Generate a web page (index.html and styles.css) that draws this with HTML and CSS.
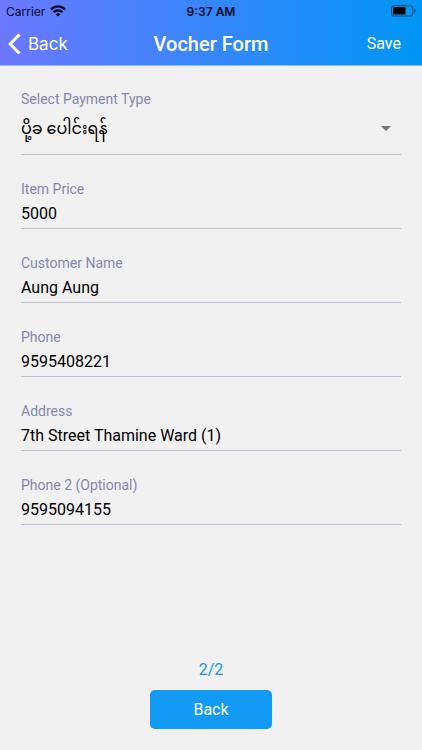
FILE: index.html
```html
<!DOCTYPE html>
<html lang="en">

<head>
  <meta charset="UTF-8">
  <title>Vocher Form</title>
  <meta name="viewport" content="width=device-width, initial-scale=1.0">
  <link rel="stylesheet" href="styles.css">
</head>

<body>

  <header class="header">
    <div class="status-bar">
      <div class="carrier">
        <span>Carrier</span>
        <svg width="16" height="12" viewBox="0 0 16 12" fill="none" stroke="#050a28" stroke-width="2.400">
          <path d="M1 4.400C5 .4 11 .4 15 4.400M3.600 7.200c2.600-2.400 6.200-2.400 8.800 0" />
          <path d="M8 11.600L5.600 9.200c1.400-1.200 3.400-1.200 4.800 0z" fill="#050a28" stroke="none" />
        </svg>
      </div>
      <span class="time">9:37 AM</span>
      <svg class="battery" width="25" height="12" viewBox="0 0 25 12">
        <rect x=".6" y=".6" width="21" height="10.400" rx="2.600" fill="none" stroke="#07518d" stroke-width="1.100" />
        <rect x="2" y="2" width="12.500" height="7.600" rx="1.200" fill="#000" />
        <path d="M23 4v4c1-.3 1.500-1 1.500-2s-.5-1.700-1.500-2z" fill="#07518d" />
      </svg>
    </div>
    <nav class="nav-bar">
      <button type="button" class="nav-back">
        <svg width="13" height="22" viewBox="0 0 13 22" fill="none" stroke="#fff" stroke-width="3">
          <path d="M11.500 1.500L2.200 11l9.300 9.500" />
        </svg>
        Back
      </button>
      <h1 class="nav-title">Vocher Form</h1>
      <button type="submit" form="voucher-form" class="nav-save">Save</button>
    </nav>
  </header>

  <form class="form" id="voucher-form">
    <div class="field">
      <label for="payment-type">Select Payment Type</label>
      <div class="select-wrap">
        <select id="payment-type">
          <option>ပို့ခ ပေါင်းရန်</option>
        </select>
      </div>
    </div>

    <div class="field">
      <label for="price">Item Price</label>
      <input type="text" id="price" value="5000">
    </div>

    <div class="field">
      <label for="name">Customer Name</label>
      <input type="text" id="name" value="Aung Aung">
    </div>

    <div class="field">
      <label for="phone">Phone</label>
      <input type="tel" id="phone" value="9595408221">
    </div>

    <div class="field">
      <label for="address">Address</label>
      <input type="text" id="address" value="7th Street Thamine Ward (1)">
    </div>

    <div class="field">
      <label for="phone2">Phone 2 (Optional)</label>
      <input type="tel" id="phone2" value="9595094155">
    </div>
  </form>

  <footer class="footer">
    <div class="step">2/2</div>
    <button type="button" class="back-btn">Back</button>
  </footer>

</body>

</html>
```
FILE: styles.css
```css
* {
  box-sizing: border-box;
}

body {
  margin: 0;
  min-height: 100vh;
  display: flex;
  flex-direction: column;
  background: #f1f1f1;
  font-family: Roboto, "Noto Sans Myanmar", "Noto Sans", sans-serif;
  font-size: 16px;
  color: #000;
}

button,
input,
select {
  font: inherit;
  color: inherit;
  border: none;
  border-radius: 0;
  background: none;
  padding: 0;
  outline: none;
}

button {
  cursor: pointer;
}

.header {
  background: linear-gradient(90deg, #6c78ff, #0096f4);
  border-bottom: 1px solid #8fbdf0;
}

.status-bar {
  display: grid;
  grid-template-columns: 1fr auto 1fr;
  align-items: center;
  height: 22px;
  padding: 0 6px;
  font-family: Inter, sans-serif;
  font-size: 12px;
  color: #050a28;
}

.carrier {
  display: flex;
  align-items: center;
  gap: 5px;
}

.time {
  font-weight: 600;
}

.battery {
  justify-self: end;
}

.nav-bar {
  display: grid;
  grid-template-columns: 1fr auto 1fr;
  align-items: center;
  height: 43px;
  padding: 0 8px;
  color: #fff;
}

.nav-back {
  justify-self: start;
  display: flex;
  align-items: center;
  gap: 7px;
  font-family: Inter, sans-serif;
  font-size: 17px;
}

.nav-title {
  margin: 0;
  font-size: 20px;
  font-weight: 500;
}

.nav-save {
  justify-self: end;
  padding-right: 13px;
}

.form {
  flex: 1;
  display: flex;
  flex-direction: column;
  gap: 25px;
  padding: 24px 21px;
}

.field {
  display: flex;
  flex-direction: column;
}

.field label {
  font-size: 14px;
  line-height: 18px;
  color: #8588ad;
}

.field input {
  width: 100%;
  height: 31px;
  border-bottom: 1px solid #bfc3d6;
}

.select-wrap {
  position: relative;
  border-bottom: 1px solid #bfc3d6;
}

.select-wrap select {
  display: block;
  width: 100%;
  height: 46px;
  padding-bottom: 4px;
  line-height: 42px;
  appearance: none;
}

/* drop-down arrow */
.select-wrap::after {
  content: "";
  position: absolute;
  top: 18px;
  right: 10px;
  border: 5px solid transparent;
  border-top-color: #757575;
  border-bottom: none;
  pointer-events: none;
}

.footer {
  display: flex;
  flex-direction: column;
  align-items: center;
  gap: 10px;
  padding-bottom: 21px;
}

.step {
  line-height: 20px;
  color: #2196f3;
}

.back-btn {
  width: 122px;
  height: 39px;
  border-radius: 5px;
  background: #139af4;
  color: #fff;
}
```
